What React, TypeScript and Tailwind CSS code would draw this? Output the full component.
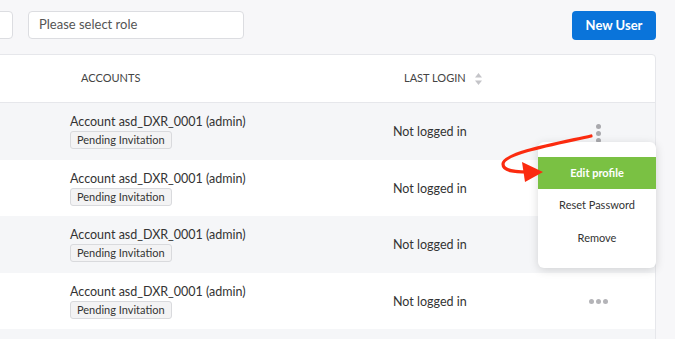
import React from "react";

const rows = [0, 1, 2, 3];

function HDots() {
  return (
    <div className="flex gap-[2px] mt-[2px]">
      <span className="w-[5px] h-[5px] rounded-full bg-[#b4b4b8]" />
      <span className="w-[5px] h-[5px] rounded-full bg-[#b4b4b8]" />
      <span className="w-[5px] h-[5px] rounded-full bg-[#b4b4b8]" />
    </div>
  );
}

function VDots() {
  return (
    <div className="flex flex-col gap-[2px] mt-[5px]">
      <span className="w-[5px] h-[5px] rounded-full bg-[#a9a9ad]" />
      <span className="w-[5px] h-[5px] rounded-full bg-[#a9a9ad]" />
      <span className="w-[5px] h-[5px] rounded-full bg-[#a9a9ad]" />
    </div>
  );
}

export default function App() {
  return (
    <div className="relative w-[675px] h-[339px] overflow-hidden bg-[#f7f7f9] font-['Lato','Noto_Sans',sans-serif] text-[#333]">
      {/* top bar */}
      <div className="flex items-start h-[54px] pt-[11px] pr-[19px]">
        <div className="ml-[-100px] w-[113px] h-[28px] rounded-[4px] border border-[#dcdde1] bg-white shrink-0" />
        <div className="ml-[15px] w-[216px] h-[28px] rounded-[4px] border border-[#dcdde1] bg-white flex items-center pl-[10px] text-[13px] text-[#555] shrink-0">
          Please select role
        </div>
        <button className="ml-auto w-[84px] h-[29px] rounded-[4px] bg-[#0a74da] text-white text-[13px] font-bold flex items-center justify-center">
          New User
        </button>
      </div>

      {/* card */}
      <div className="ml-[-10px] mr-[19px] bg-white border border-[#e6e7eb] rounded-tr-[4px]">
        <div className="flex items-center h-[48px] border-b border-[#e6e7eb] text-[11px] text-[#444] uppercase">
          <div className="w-[79px] shrink-0" />
          <div className="w-[323px] shrink-0 pl-[11px]">Accounts</div>
          <div className="w-[175px] shrink-0 pl-[11px] flex items-center">
            <span>Last Login</span>
            <svg className="ml-[9px]" width="7" height="12" viewBox="0 0 7 12">
              <path d="M3.5 0 L7 4.5 L0 4.5 Z" fill="#c4c4c8" />
              <path d="M3.5 12 L7 7.5 L0 7.5 Z" fill="#c4c4c8" />
            </svg>
          </div>
        </div>
        {rows.map((i) => (
          <div
            key={i}
            className={`flex items-center h-[56.5px] ${i % 2 === 0 ? "bg-[#f5f6f8]" : "bg-white"}`}
          >
            <div className="w-[79px] shrink-0" />
            <div className="w-[323px] shrink-0 flex flex-col items-start pt-[1px]">
              <div className="text-[12.5px] leading-[16px]">Account asd_DXR_0001 (admin)</div>
              <div className="mt-[1px] h-[18px] px-[6px] flex items-center rounded-[3px] border border-[#d9dadd] bg-[#f3f3f4] text-[11px] text-[#333]">
                Pending Invitation
              </div>
            </div>
            <div className="w-[175px] shrink-0 text-[12.5px] pt-[3px]">Not logged in</div>
            <div className="w-[60px] shrink-0 flex justify-center">
              {i === 0 ? <VDots /> : <HDots />}
            </div>
          </div>
        ))}
        <div className="h-[56.5px] bg-[#f5f6f8]" />
      </div>

      {/* dropdown menu */}
      <div className="absolute left-[538px] top-[142px] w-[118px] h-[126px] bg-white rounded-[6px] shadow-[0_2px_10px_rgba(0,0,0,0.15)] pt-[15px] text-[11px] text-[#333]">
        <div className="h-[32px] bg-[#7ac143] text-white font-bold flex items-center justify-center">
          Edit profile
        </div>
        <div className="h-[33px] flex items-center justify-center">Reset Password</div>
        <div className="h-[33px] flex items-center justify-center">Remove</div>
      </div>

      {/* annotation arrow */}
      <svg className="absolute left-0 top-0 pointer-events-none" width="675" height="339" viewBox="0 0 675 339">
        <path
          d="M591 136 C 560 143, 503 153, 503 164 C 503 171, 514 172, 528 172"
          fill="none"
          stroke="#fb2b0f"
          strokeWidth="3.2"
          strokeLinecap="round"
        />
        <polygon points="522,162 543,172 525,182" fill="#fb2b0f" />
      </svg>
    </div>
  );
}
